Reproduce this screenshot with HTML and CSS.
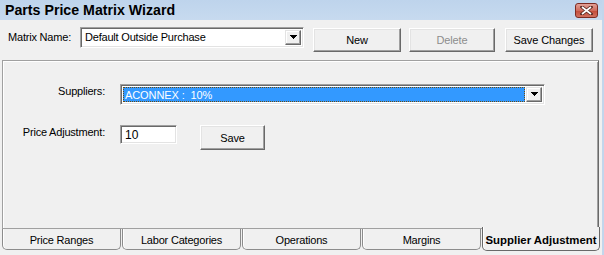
FILE: index.html
```html
<!DOCTYPE html>
<html>
<head>
<meta charset="utf-8">
<link rel="stylesheet" href="styles.css">
</head>
<body>
<div class="window">
  <div class="titlebar">
    <span class="title">Parts Price Matrix Wizard</span>
    <span class="close">
      <svg width="13" height="9" viewBox="0 0 13 9"><path d="M2 1 L11 8 M11 1 L2 8" stroke="#5a2a22" stroke-width="3.4" stroke-linecap="square"/><path d="M2 1 L11 8 M11 1 L2 8" stroke="#fff" stroke-width="1.6"/></svg>
    </span>
  </div>
  <div class="main">
    <div class="toolbar">
      <span class="label matrix-label">Matrix Name:</span>
      <div class="combo matrix-combo">
        <span class="combo-text">Default Outside Purchase</span>
        <span class="arrow"><svg width="7" height="5" viewBox="0 0 7 5"><path d="M0 0h7v1H0zM1 1h5v1H1zM2 2h3v1H2zM3 3h1v1H3z" fill="#000"/></svg></span>
      </div>
      <button class="btn tb-btn">New</button>
      <button class="btn tb-btn disabled">Delete</button>
      <button class="btn tb-btn">Save Changes</button>
    </div>
    <div class="panel">
      <div class="form">
        <span class="label flabel">Suppliers:</span>
        <div class="combo sup-combo">
          <span class="sel"><span class="sel-text">ACONNEX :&nbsp; 10%</span></span>
          <span class="arrow"><svg width="7" height="5" viewBox="0 0 7 5"><path d="M0 0h7v1H0zM1 1h5v1H1zM2 2h3v1H2zM3 3h1v1H3z" fill="#000"/></svg></span>
        </div>
        <span class="label flabel">Price Adjustment:</span>
        <div class="row2">
          <div class="field">10</div>
          <button class="btn save-btn">Save</button>
        </div>
      </div>
    </div>
    <div class="tabs">
      <div class="tab">Price Ranges</div>
      <div class="tab">Labor Categories</div>
      <div class="tab">Operations</div>
      <div class="tab">Margins</div>
      <div class="tab active">Supplier Adjustment</div>
    </div>
  </div>
</div>
</body>
</html>
```

FILE: styles.css
```css
* { box-sizing: border-box; }
html, body { margin: 0; padding: 0; }
body {
  width: 604px;
  height: 255px;
  overflow: hidden;
  background: #f0f0f0;
  font-family: "Liberation Sans", Arial, sans-serif;
  font-size: 11px;
  color: #000;
}
.window {
  width: 604px;
  height: 255px;
  background: #f0f0f0;
  display: flex;
  flex-direction: column;
  border-right: 2px solid #c2d6ec;
}
.titlebar {
  height: 20px;
  flex: none;
  background: linear-gradient(#bed4ec, #c7daef);
  display: flex;
  align-items: center;
  justify-content: space-between;
  padding-left: 5px;
  padding-right: 4px;
}
.title {
  font-weight: bold;
  font-size: 14.2px;
}
.close {
  width: 23px;
  height: 15px;
  margin-top: 1px;
  border: 1px solid #7d2b22;
  border-radius: 3px;
  background: linear-gradient(#e3a197, #cf6b5c 50%, #c24a38 51%, #d0705f);
  display: flex;
  align-items: center;
  justify-content: center;
}
.close svg { display: block; }
.main {
  flex: 1;
  display: flex;
  flex-direction: column;
}
.toolbar {
  height: 40px;
  flex: none;
  display: flex;
  align-items: flex-start;
  padding: 7px 0 0 8px;
}
.label { white-space: nowrap; letter-spacing: -0.2px; }
.matrix-label { margin-top: 4px; width: 72px; }
.combo {
  display: flex;
  background: #fff;
  border: 1px solid;
  border-color: #a0a0a0 #fff #fff #a0a0a0;
  box-shadow: inset 1px 1px #696969, inset -1px -1px #e3e3e3;
  padding: 2px;
}
.matrix-combo {
  width: 224px;
  height: 21px;
}
.combo-text {
  flex: 1;
  padding-left: 2px;
  line-height: 15px;
  letter-spacing: -0.2px;
}
.arrow {
  width: 16px;
  flex: none;
  background: #f0f0f0;
  border: 1px solid;
  border-color: #e3e3e3 #696969 #696969 #e3e3e3;
  box-shadow: inset -1px -1px #a0a0a0, inset 1px 1px #fff;
  display: flex;
  align-items: center;
  justify-content: center;
}
.arrow svg { display: block; }
.btn {
  font-family: inherit;
  font-size: 11px;
  color: #000;
  background: #f0f0f0;
  border: 1px solid;
  border-color: #fff #696969 #696969 #fff;
  box-shadow: inset -1px -1px #a0a0a0, inset 1px 1px #e3e3e3;
  padding: 0;
  letter-spacing: -0.1px;
}
.tb-btn {
  width: 88px;
  height: 24px;
  margin-top: 1px;
  margin-left: 9px;
}
.tb-btn.disabled { color: #8d8d8d; margin-left: 8px; width: 86px; }
.tb-btn:last-child { margin-left: 10px; }
.panel {
  flex: none;
  height: 169px;
  margin: 0 3px 0 2px;
  border: 1px solid;
  border-color: #a0a0a0 #696969 #a0a0a0 #a0a0a0;
  box-shadow: inset 1px 1px #fff, inset -1px 0 #a0a0a0;
  padding-top: 23px;
}
.form {
  display: grid;
  grid-template-columns: 102px 1fr;
  column-gap: 15px;
  row-gap: 20px;
  align-items: start;
}
.flabel { text-align: right; margin-top: 1px; }
.sup-combo {
  width: 425px;
  height: 21px;
}
.sel {
  flex: 1;
  background: #3399ff;
  margin-right: 1px;
  border: 1px dotted #6a4a10;
  color: #fff;
  display: flex;
  align-items: center;
  padding-left: 1px;
}
.sel-text { letter-spacing: -0.1px; }
.row2 { display: flex; align-items: flex-start; }
.field {
  width: 57px;
  height: 19px;
  background: #fff;
  border: 1px solid;
  border-color: #a0a0a0 #fff #fff #a0a0a0;
  box-shadow: inset 1px 1px #696969, inset -1px -1px #e3e3e3;
  padding: 2px 0 0 4px;
  font-size: 12px;
}
.save-btn {
  width: 65px;
  height: 25px;
  margin-left: 23px;
}
.tabs {
  display: flex;
  margin-left: 2px;
  height: 23px;
}
.tab {
  width: 119px;
  height: 21px;
  border: 1px solid #8c8c8c;
  border-top: none;
  border-radius: 0 0 5px 5px;
  box-shadow: inset 1px 0 #fff;
  display: flex;
  align-items: center;
  justify-content: center;
  letter-spacing: -0.2px;
  padding-top: 1px;
}
.tab + .tab { margin-left: 1px; width: 119px; }
.tab.active {
  width: 118px;
  height: 24px;
  margin-top: -2px;
  font-weight: bold;
  font-size: 11.4px;
  letter-spacing: 0;
  border-color: #696969;
  background: #f0f0f0;
  padding-top: 2px;
}
```
